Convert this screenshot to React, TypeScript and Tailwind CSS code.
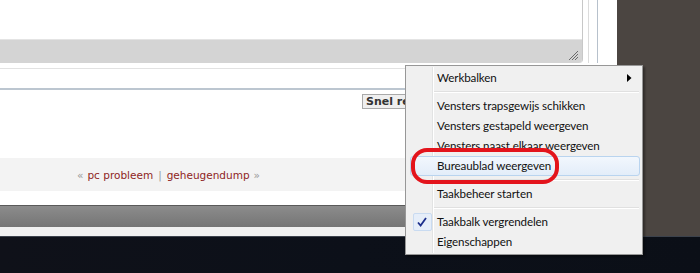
const menuFont = { fontFamily: 'Lato, "Noto Sans", sans-serif' };

function Item({ label, hot, check, arrow }: { label: string; hot?: boolean; check?: boolean; arrow?: boolean }) {
  return (
    <div className="relative flex h-[20px] items-center">
      {hot && (
        <div className="absolute inset-y-0 left-[4px] right-[2px] rounded-[3px] border border-[#b9d4ef] bg-gradient-to-b from-[#f2f7fd] to-[#e3edf9]" />
      )}
      <div className="relative flex w-[31px] justify-center">
        {check && (
          <div className="ml-[1px] flex h-[18px] w-[19px] items-center justify-center rounded-[2px] border border-[#c9dbf1] bg-[#e6eef9]">
            <svg width="10" height="10" viewBox="0 0 10 10">
              <path d="M1 5.5 L3.6 8.5 L9 1" fill="none" stroke="#1c2f8c" strokeWidth="1.8" />
            </svg>
          </div>
        )}
      </div>
      <span className="relative text-[11.6px] leading-[14px] tracking-[-0.1px] text-[#111]">{label}</span>
      {arrow && (
        <svg className="absolute right-[10px]" width="5" height="8" viewBox="0 0 5 8">
          <path d="M0 0 L4.5 4 L0 8 Z" fill="#000" />
        </svg>
      )}
    </div>
  );
}

function Sep() {
  return (
    <div className="flex h-[8px] items-center pl-[27px] pr-[3px]">
      <div className="w-full border-b border-t border-[#e0e0e0] border-b-white" />
    </div>
  );
}

export default function App() {
  return (
    <div className="relative flex h-[273px] w-[700px] flex-col overflow-hidden bg-white">
      <div className="flex h-[236px]">
        {/* page */}
        <div className="flex w-[617px] flex-col">
          <div className="flex h-[63px]">
            <div className="flex w-[583px] flex-col overflow-hidden rounded-br-[4px] border-r border-[#c8c8c8]">
              <div className="h-[39px] bg-white" />
              <div className="relative flex h-[24px] items-end justify-end border-t border-[#e4e4e4] bg-[#d4d4d4] pb-[2px] pr-[3px]">
                <svg width="12" height="12" viewBox="0 0 12 12">
                  <path d="M11 2 L2 11 M11 5 L5 11 M11 8 L8 11" stroke="#6a6a6a" strokeWidth="1" />
                </svg>
              </div>
            </div>
            <div className="w-[5px]" />
            <div className="w-[1px] bg-[#dcdcdc]" />
            <div className="w-[8px]" />
            <div className="w-[1px] bg-[#b7c1cc]" />
          </div>
          <div className="h-[5px]" />
          <div className="h-[1px] bg-[#e2e2e2]" />
          <div className="h-[19px]" />
          <div className="h-[2px] bg-[#bcc6d0]" />
          <div className="h-[4px]" />
          <div className="flex h-[15px] pl-[362px]">
            <div
              className="border border-[#a9a9a9] bg-[#efefef] pl-[3px] pr-[6px] text-[11px] font-bold leading-[13px] text-[#333]"
              style={{ fontFamily: '"DejaVu Sans", sans-serif' }}
            >
              Snel reageren
            </div>
          </div>
          <div className="h-[49px]" />
          <div
            className="flex h-[33px] items-center justify-center bg-[#f3f3f3] pr-[280px] pt-[2px] text-[10.5px] text-[#999]"
            style={{ fontFamily: '"DejaVu Sans", sans-serif' }}
          >
            «<span className="ml-[4px] text-[#8f1f24]">pc probleem</span>
            <span className="mx-[5px]">|</span>
            <span className="text-[#8f1f24]">geheugendump</span>
            <span className="ml-[4px]">»</span>
          </div>
          <div className="h-[14px]" />
          <div className="h-[1px] bg-[#5a5a5a]" />
          <div className="h-[21px] bg-gradient-to-b from-[#8c8c8c] to-[#757575]" />
          <div className="h-[9px] bg-[#f0f0f0]" />
        </div>
        <div className="flex-1 bg-[#4b4541]" />
      </div>
      <div className="h-[1px] bg-[#3c424c]" />
      <div className="flex-1 bg-gradient-to-r from-[#0f1119] via-[#0c1019] to-[#0b0f17]" />

      {/* context menu */}
      <div
        className="absolute left-[405px] top-[65px] flex h-[190px] w-[238px] flex-col border border-[#979797] bg-[#f0f0f0] py-[2px] shadow-[2px_2px_2px_rgba(0,0,0,0.35)]"
        style={menuFont}
      >
        <div className="absolute bottom-[1px] left-[26px] top-[1px] w-[2px] border-l border-r border-[#e2e3e3] border-r-white" />
        <Item label="Werkbalken" arrow />
        <Sep />
        <Item label="Vensters trapsgewijs schikken" />
        <Item label="Vensters gestapeld weergeven" />
        <Item label="Vensters naast elkaar weergeven" />
        <Item label="Bureaublad weergeven" hot />
        <Sep />
        <Item label="Taakbeheer starten" />
        <Sep />
        <Item label="Taakbalk vergrendelen" check />
        <Item label="Eigenschappen" />
      </div>

      {/* annotation */}
      <div className="absolute left-[411px] top-[148px] h-[36px] w-[148px] rounded-[16px] border-[4px] border-[#e3141c]" />
    </div>
  );
}
